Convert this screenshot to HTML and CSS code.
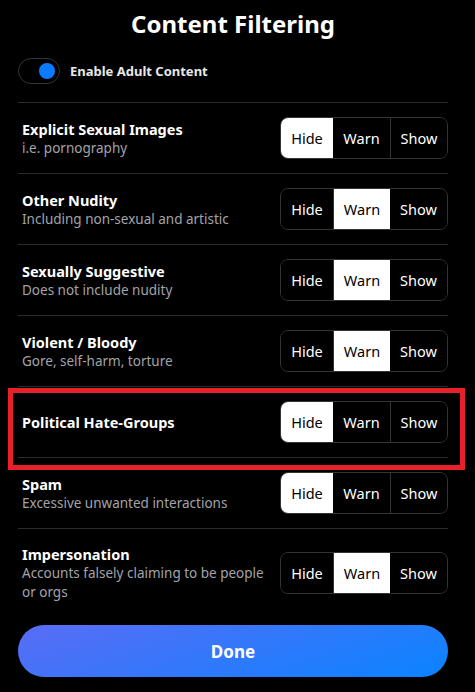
FILE: index.html
```html
<!DOCTYPE html>
<html lang="en">
<head>
  <meta charset="UTF-8" />
  <meta name="viewport" content="width=device-width, initial-scale=1.0" />
  <title>Content Filtering</title>
  <link rel="stylesheet" href="styles.css">
</head>
<body>
  <div class="panel">
    <h1>Content Filtering</h1>

    <label class="adult">
      <span class="toggle"><span class="knob"></span></span>
      <span>Enable Adult Content</span>
    </label>

    <div class="list">
      <div class="row">
        <div class="info">
          <div class="title">Explicit Sexual Images</div>
          <div class="desc">i.e. pornography</div>
        </div>
        <div class="seg">
          <button class="on">Hide</button><button>Warn</button><button>Show</button>
        </div>
      </div>
      <div class="row">
        <div class="info">
          <div class="title">Other Nudity</div>
          <div class="desc">Including non-sexual and artistic</div>
        </div>
        <div class="seg">
          <button>Hide</button><button class="on">Warn</button><button>Show</button>
        </div>
      </div>
      <div class="row">
        <div class="info">
          <div class="title">Sexually Suggestive</div>
          <div class="desc">Does not include nudity</div>
        </div>
        <div class="seg">
          <button>Hide</button><button class="on">Warn</button><button>Show</button>
        </div>
      </div>
      <div class="row">
        <div class="info">
          <div class="title">Violent / Bloody</div>
          <div class="desc">Gore, self-harm, torture</div>
        </div>
        <div class="seg">
          <button>Hide</button><button class="on">Warn</button><button>Show</button>
        </div>
      </div>
      <div class="row marked">
        <div class="info">
          <div class="title">Political Hate-Groups</div>
        </div>
        <div class="seg">
          <button class="on">Hide</button><button>Warn</button><button>Show</button>
        </div>
        <span class="highlight"></span>
      </div>
      <div class="row">
        <div class="info">
          <div class="title">Spam</div>
          <div class="desc">Excessive unwanted interactions</div>
        </div>
        <div class="seg">
          <button class="on">Hide</button><button>Warn</button><button>Show</button>
        </div>
      </div>
      <div class="row last">
        <div class="info">
          <div class="title">Impersonation</div>
          <div class="desc">Accounts falsely claiming to be people or orgs</div>
        </div>
        <div class="seg">
          <button>Hide</button><button class="on">Warn</button><button>Show</button>
        </div>
      </div>
    </div>

    <button class="done">Done</button>
  </div>
</body>
</html>
```

FILE: styles.css
```css
body {
  margin: 0;
  background: #000;
  color: #fff;
  font-family: "Noto Sans", "Open Sans", sans-serif;
}
.panel {
  width: 430px;
  margin-left: 18px;
}
h1 {
  margin: 0;
  padding-top: 7px;
  height: 37px;
  text-align: center;
  font-size: 24px;
  font-weight: 700;
  line-height: 34px;
}
.adult {
  display: flex;
  align-items: center;
  gap: 10px;
  margin-top: 14px;
  padding-bottom: 18px;
  border-bottom: 1px solid #2a2a2e;
  font-size: 13px;
  font-weight: 700;
  color: #e8e8e8;
}
.toggle {
  position: relative;
  width: 40px;
  height: 24px;
  border: 1px solid #333338;
  border-radius: 13px;
}
.knob {
  position: absolute;
  right: 4px;
  top: 4px;
  width: 16px;
  height: 16px;
  border-radius: 50%;
  background: #0a7aff;
}
.row {
  position: relative;
  display: flex;
  align-items: center;
  justify-content: space-between;
  gap: 10px;
  padding: 14px 0 14px 4px;
  min-height: 42px;
  border-bottom: 1px solid #2a2a2e;
}
.row.last {
  border-bottom: none;
  padding-top: 15px;
}
.info {
  flex: 1;
}
.title {
  font-size: 14.5px;
  font-weight: 700;
  line-height: 20px;
}
.desc {
  font-size: 13.5px;
  line-height: 19px;
  color: #a3a3a8;
}
.seg {
  display: flex;
  flex-shrink: 0;
  height: 40px;
  border: 1px solid #333338;
  border-radius: 8px;
  overflow: hidden;
}
.seg button {
  background: #000;
  color: #fff;
  border: none;
  border-left: 1px solid #333338;
  font-family: inherit;
  font-size: 14.5px;
  padding: 0;
  width: 57px;
}
.seg button:first-child {
  border-left: none;
  width: 52px;
}
.seg button.on {
  background: #fff;
  color: #000;
}
.seg button.on + button {
  border-left: none;
}
.highlight {
  position: absolute;
  left: -10px;
  right: -17px;
  top: 1px;
  bottom: -13px;
  border: 5px solid #e8202a;
  pointer-events: none;
}
.done {
  display: block;
  width: 430px;
  height: 52px;
  margin-top: 9px;
  border: none;
  border-radius: 26px;
  background: linear-gradient(160deg, #5a6cf6, #0a84ff);
  color: #fff;
  font-family: inherit;
  font-size: 17px;
  font-weight: 700;
}
```
